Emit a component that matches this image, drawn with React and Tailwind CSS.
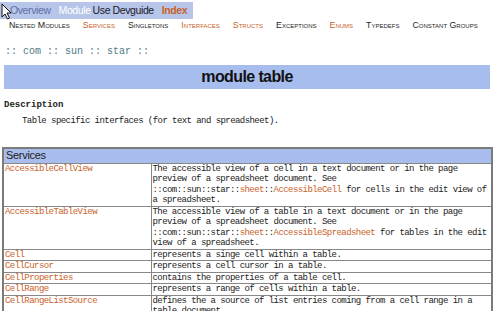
import React from "react";

const ORANGE = "text-[#c9622a]";

const navItems = [
  { label: "Nested Modules", link: false },
  { label: "Services", link: true },
  { label: "Singletons", link: false },
  { label: "Interfaces", link: true },
  { label: "Structs", link: true },
  { label: "Exceptions", link: false },
  { label: "Enums", link: true },
  { label: "Typedefs", link: false },
  { label: "Constant Groups", link: false },
];

// each row: name + lines of the description (parts flagged as links)
const services = [
  {
    name: "AccessibleCellView",
    lines: [
      [["The accessible view of a cell in a text document or in the page"]],
      [["preview of a spreadsheet document. See"]],
      [["::com::sun::star::"], ["sheet", true], ["::"], ["AccessibleCell", true], [" for cells in the edit view of"]],
      [["a spreadsheet."]],
    ],
  },
  {
    name: "AccessibleTableView",
    lines: [
      [["The accessible view of a table in a text document or in the page"]],
      [["preview of a spreadsheet document. See"]],
      [["::com::sun::star::"], ["sheet", true], ["::"], ["AccessibleSpreadsheet", true], [" for tables in the edit"]],
      [["view of a spreadsheet."]],
    ],
  },
  { name: "Cell", lines: [[["represents a singe cell within a table."]]] },
  { name: "CellCursor", lines: [[["represents a cell cursor in a table."]]] },
  { name: "CellProperties", lines: [[["contains the properties of a table cell."]]] },
  { name: "CellRange", lines: [[["represents a range of cells within a table."]]] },
  {
    name: "CellRangeListSource",
    lines: [
      [["defines the a source of list entries coming from a cell range in a"]],
      [["table document."]],
    ],
  },
];

const Cursor = () => (
  <svg className="absolute left-[1px] top-[3px]" width="11" height="17" viewBox="0 0 11 17">
    <path d="M1 1 L1 14 L4 11 L6.5 16 L8.5 15 L6 10 L10 10 Z" fill="#fff" stroke="#111" strokeWidth="1" strokeLinejoin="round" />
  </svg>
);

const App = () => {
  return (
    <div className="relative w-[500px] h-[311px] overflow-hidden bg-white font-['Liberation_Sans',Arial,sans-serif]">
      {/* top navigation */}
      <div className="pt-[2px]">
        <div className="flex items-center h-[17px] w-[193px] bg-[#b7c5e9] pl-[10px] text-[10.5px] tracking-[-0.4px] whitespace-nowrap">
          <span className="text-[#5d6fa8]">Overview</span>
          <span className="ml-[8px] text-white">Module</span>
          <span className="ml-[2px] text-[#1a1a2a]">Use Devguide</span>
          <span className={`ml-[8px] font-bold ${ORANGE}`}>Index</span>
        </div>
      </div>

      {/* section navigation */}
      <div className="flex h-[12px] items-center pl-[9px] gap-[13px] text-[8.8px] leading-[12px] [font-variant:small-caps] whitespace-nowrap">
        {navItems.map((n) => (
          <span key={n.label} className={n.link ? ORANGE : "text-[#1e1e1e]"}>
            {n.label}
          </span>
        ))}
      </div>

      {/* module path */}
      <div className="mt-[15px] h-[12px] pl-[5px] font-['Liberation_Mono',monospace] text-[10px] leading-[12px] text-[#4f7a88]">
        :: com :: sun :: star ::
      </div>

      {/* title */}
      <div className="mt-[7px] ml-[4px] w-[486px] h-[24px] bg-[#a7bdee] flex items-center justify-center">
        <span className="text-[16px] font-bold tracking-[-0.6px] text-[#111]">module table</span>
      </div>

      {/* description */}
      <div className="font-['Liberation_Mono',monospace] text-[#222]">
        <div className="mt-[10px] pl-[4px] h-[12px] text-[9px] leading-[12px] font-bold">Description</div>
        <div className="mt-[4px] pl-[22px] h-[12px] text-[9px] leading-[12px] tracking-[-0.56px]">
          Table specific interfaces (for text and spreadsheet).
        </div>
      </div>

      {/* services table */}
      <table className="mt-[20px] ml-[2px] w-[491px] border-collapse border-2 border-[#7b7b7b] table-fixed">
        <colgroup>
          <col className="w-[148px]" />
          <col />
        </colgroup>
        <thead>
          <tr>
            <th colSpan={2} className="h-[15px] border border-[#888] bg-[#a9bdec] px-[2px] text-left font-normal text-[11px] leading-[13px] tracking-[-0.3px] text-[#222]">
              Services
            </th>
          </tr>
        </thead>
        <tbody className="font-['Liberation_Mono',monospace] text-[9px] leading-[10.5px] tracking-[-0.56px] text-[#222]">
          {services.map((s) => (
            <tr key={s.name}>
              <td className={`border border-[#888] align-top px-[1px] ${ORANGE}`}>{s.name}</td>
              <td className="border border-[#888] align-top px-[1px] whitespace-pre">
                {s.lines.map((line, i) => (
                  <div key={i}>
                    {line.map(([t, link], j) => (
                      <span key={j} className={link ? ORANGE : ""}>
                        {t}
                      </span>
                    ))}
                  </div>
                ))}
              </td>
            </tr>
          ))}
        </tbody>
      </table>

      <Cursor />
    </div>
  );
};

export default App;
